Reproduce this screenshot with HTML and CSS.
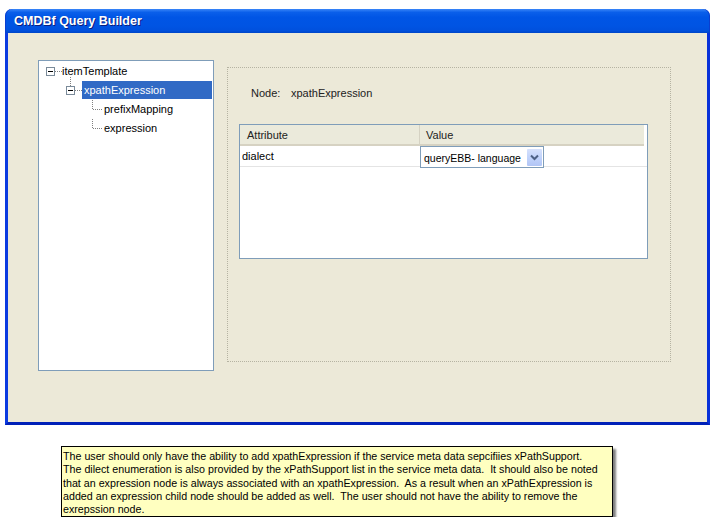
FILE: index.html
```html
<!DOCTYPE html>
<html>
<head>
<meta charset="utf-8">
<link rel="stylesheet" href="styles.css">
</head>
<body>
<div class="window">
  <div class="titlebar"><span class="title">CMDBf Query Builder</span></div>
  <div class="client">
    <div class="tree">
      <div class="row r1">
        <svg class="lead" width="16" height="19" viewBox="0 0 16 19">
          <rect x="0.5" y="5.5" width="8" height="8" fill="#fff" stroke="#7A8A99"/>
          <line x1="2" y1="9.5" x2="7" y2="9.5" stroke="#000"/>
          <line x1="9" y1="9.5" x2="16" y2="9.5" stroke="#808080" stroke-dasharray="1 1"/>
        </svg>
        <span class="label">itemTemplate</span>
      </div>
      <div class="row r2">
        <svg class="lead" width="16" height="19" viewBox="0 0 16 19">
          <line x1="4.5" y1="-4" x2="4.5" y2="5" stroke="#808080" stroke-dasharray="1 1"/>
          <rect x="0.5" y="5.5" width="8" height="8" fill="#fff" stroke="#7A8A99"/>
          <line x1="2" y1="9.5" x2="7" y2="9.5" stroke="#000"/>
          <line x1="9" y1="9.5" x2="16" y2="9.5" stroke="#808080" stroke-dasharray="1 1"/>
        </svg>
        <span class="label selected">xpathExpression</span>
      </div>
      <div class="row r3">
        <svg class="lead" width="12" height="19" viewBox="0 0 12 19">
          <line x1="0.5" y1="0" x2="0.5" y2="10" stroke="#808080" stroke-dasharray="1 1"/>
          <line x1="1" y1="9.5" x2="11" y2="9.5" stroke="#808080" stroke-dasharray="1 1"/>
        </svg>
        <span class="label">prefixMapping</span>
      </div>
      <div class="row r3">
        <svg class="lead" width="12" height="19" viewBox="0 0 12 19">
          <line x1="0.5" y1="0" x2="0.5" y2="10" stroke="#808080" stroke-dasharray="1 1"/>
          <line x1="1" y1="9.5" x2="11" y2="9.5" stroke="#808080" stroke-dasharray="1 1"/>
        </svg>
        <span class="label">expression</span>
      </div>
    </div>
    <div class="editor">
      <div class="node-line"><span class="node-key">Node:</span><span>xpathExpression</span></div>
      <div class="grid">
        <div class="thead">
          <div class="th c1">Attribute</div>
          <div class="th c2">Value</div>
        </div>
        <div class="trow">
          <div class="td c1">dialect</div>
          <div class="td c2">
            <div class="select">
              <span class="sel-text">queryEBB- language</span>
              <span class="arrow">
                <svg width="9" height="7" viewBox="0 0 9 7"><path d="M1 1.5 L4.5 5 L8 1.5" fill="none" stroke="#4D6185" stroke-width="2"/></svg>
              </span>
            </div>
          </div>
        </div>
      </div>
    </div>
  </div>
</div>
<div class="note">The user should only have the ability to add xpathExpression if the service meta data sepcifiies xPathSupport.<br>The dilect enumeration is also provided by the xPathSupport list in the service meta data.&nbsp; It should also be noted<br>that an expression node is always associated with an xpathExpression.&nbsp; As a result when an xPathExpression is<br>added an expression child node should be added as well.&nbsp; The user should not have the ability to remove the<br>exrepssion node.</div>
</body>
</html>
```

FILE: styles.css
```css
html, body {
  margin: 0;
  padding: 0;
  background: #ffffff;
}
body {
  font-family: "Liberation Sans", Arial, sans-serif;
  font-size: 11px;
  color: #000;
}
.window {
  margin: 9px 0 0 5px;
  width: 705px;
}
.titlebar {
  height: 24px;
  border-radius: 7px 7px 0 0;
  background: linear-gradient(to bottom, #3A86F8 0%, #0A5FEA 14%, #0055E5 35%, #0054E3 70%, #0050DD 90%, #0046C8 100%);
  box-shadow: inset 1px 0 0 #0A3ED0, inset -1px 0 0 #0A3ED0;
  display: flex;
  align-items: center;
  padding-left: 9px;
}
.title {
  color: #fff;
  font-family: "Liberation Sans", Arial, sans-serif;
  font-weight: bold;
  font-size: 12.5px;
  text-shadow: 1px 1px 0 #0A1E80;
}
.client {
  height: 362px;
  background: #ECE9D8;
  border: 3px solid #0831D9;
  border-top: 0;
  border-left-color: #0B3BE0;
  border-bottom-color: #0021B8;
  display: flex;
  align-items: flex-start;
  padding-top: 27px;
  box-sizing: content-box;
}
.tree {
  margin-left: 30px;
  width: 174px;
  height: 308px;
  background: #fff;
  border: 1px solid #7F9DB9;
  padding-top: 1px;
  box-sizing: content-box;
}
.row {
  height: 19px;
  display: flex;
  align-items: center;
}
.lead {
  display: block;
  overflow: visible;
  flex: none;
  shape-rendering: crispEdges;
}
.r1 { padding-left: 7px; }
.r2 { padding-left: 27px; }
.r3 { padding-left: 53px; }
.label {
  line-height: 19px;
  white-space: nowrap;
}
.selected {
  flex: 1;
  height: 18px;
  line-height: 18px;
  margin-top: -1px;
  margin-right: 1px;
  padding-left: 2px;
  background: #316AC5;
  color: #fff;
}
.editor {
  margin-left: 13px;
  margin-top: 7px;
  width: 442px;
  height: 293px;
  border: 1px dotted #B5B3A2;
}
.node-line {
  margin: 19px 0 0 23px;
  line-height: 13px;
  display: flex;
  color: #222;
}
.node-key {
  width: 40px;
}
.grid {
  margin: 24px 0 0 11px;
  width: 407px;
  height: 133px;
  background: #fff;
  border: 1px solid #7F9DB9;
}
.thead {
  display: flex;
  height: 19px;
  margin-right: 3px;
  background: #EBEADB;
  border-bottom: 2px solid #D6D2C2;
}
.th {
  line-height: 21px;
  color: #222;
}
.thead .c1 {
  width: 172px;
  padding-left: 7px;
  border-right: 1px solid #D5D2C3;
}
.thead .c2 {
  padding-left: 6px;
}
.trow {
  display: flex;
  height: 20px;
  border-bottom: 1px solid #E4E4E4;
}
.td.c1 {
  width: 178px;
  padding-left: 2px;
  line-height: 21px;
}
.td.c2 {
  flex: 1;
}
.select {
  width: 119px;
  height: 20px;
  border: 1px solid #7F9DB9;
  background: #fff;
  display: flex;
  align-items: center;
  justify-content: space-between;
  padding-left: 3px;
  box-sizing: content-box;
}
.sel-text {
  font-size: 10.5px;
  white-space: nowrap;
  margin-top: 1px;
}
.arrow {
  width: 15px;
  height: 17px;
  margin-right: 1px;
  border-radius: 1px;
  background: linear-gradient(to bottom, #D6E1FC 0%, #C1D3FB 50%, #B1C5F5 100%);
  display: flex;
  align-items: center;
  justify-content: center;
}
.arrow svg {
  display: block;
}
.note {
  margin: 21px 0 0 61px;
  width: 549px;
  height: 66px;
  border: 1px solid #000;
  background: #FFFFC0;
  box-shadow: 3px 3px 2px rgba(0, 0, 0, 0.5);
  padding: 3px 0 0 1px;
  box-sizing: content-box;
  font-size: 10.7px;
  line-height: 13.3px;
  white-space: nowrap;
  overflow: hidden;
}
```
